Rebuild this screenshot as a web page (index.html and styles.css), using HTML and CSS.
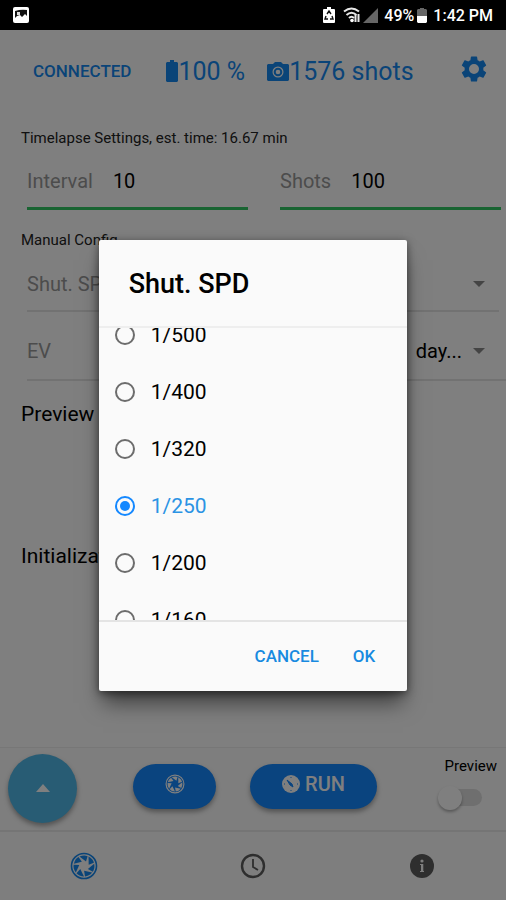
FILE: index.html
```html
<!DOCTYPE html>
<html lang="en">
<head>
<meta charset="utf-8">
<meta name="viewport" content="width=device-width, initial-scale=1">
<title>Timelapse</title>
<link rel="stylesheet" href="styles.css">
</head>
<body>
<svg class="defs" aria-hidden="true">
  <symbol id="aperture" viewBox="0 0 28 28">
    <circle cx="14" cy="14" r="12.5" fill="none" stroke="currentColor" stroke-width="1.6"/>
    <g fill="currentColor">
      <path id="blade" d="M9.500 4.600 Q14 2.600 17.600 4.200 L16 9.600Z"/>
      <use href="#blade" transform="rotate(51.43 14 14)"/>
      <use href="#blade" transform="rotate(102.86 14 14)"/>
      <use href="#blade" transform="rotate(154.29 14 14)"/>
      <use href="#blade" transform="rotate(205.71 14 14)"/>
      <use href="#blade" transform="rotate(257.14 14 14)"/>
      <use href="#blade" transform="rotate(308.57 14 14)"/>
    </g>
  </symbol>
</svg>
<div class="app">
  <div class="status">
    <svg width="16" height="16" viewBox="0 0 16 16"><rect width="16" height="16" rx="2" fill="#fff"/><path d="M2 4q6-2 12-1v6l-2-2-3 3-2-2-3 1-2 2z" fill="#111"/><path d="M4 5h3v3H4z" fill="#ddd"/></svg>
    <div class="status-right">
      <svg width="12" height="16" viewBox="0 0 12 16"><path d="M4 0h4v2h3q1 0 1 1v12q0 1-1 1H1q-1 0-1-1V3q0-1 1-1h3z" fill="#fff"/><path d="M4 7l2-3 2 3M3 9l-1 3h3M9 9l1 3H7" fill="none" stroke="#111" stroke-width="1.4"/></svg>
      <svg class="wifi" width="18" height="16" viewBox="0 0 18 16"><g fill="none" stroke="#e8e8e8" stroke-width="2"><path d="M1 4.5Q8.500-1.500 16 4.500M3.500 8Q8.500 3.500 13.500 8M6 11Q8.500 8.500 11 11"/><path d="M12.500 15V8M15.500 7v8"/></g><circle cx="9" cy="13.500" r="1.800" fill="#fff"/></svg>
      <svg class="signal" width="15" height="15" viewBox="0 0 15 15"><path d="M15 0v15H0z" fill="#666"/></svg>
      <span class="percent">49%</span>
      <svg class="cell" width="10" height="15" viewBox="0 0 10 15"><path d="M3 0h4v1h2l1 1v6H0V2l1-1h2z" fill="#666"/><path d="M0 8h10v6l-1 1H1l-1-1z" fill="#fff"/></svg>
      <span>1:42 PM</span>
    </div>
  </div>
  <div class="stage">
    <header class="header">
      <button class="connected" type="button">CONNECTED</button>
      <div class="stat battery"><svg width="12" height="22" viewBox="0 0 12 22"><path d="M4 0h4v2h3l1 1v18l-1 1H1l-1-1V3l1-1h3z" fill="currentColor"/></svg><span>100 %</span></div>
      <div class="stat"><svg width="22" height="19" viewBox="0 0 22 19"><path fill-rule="evenodd" d="M1 2h5l2-2h6l2 2h5l1 1v15l-1 1H1l-1-1V3zM11 4.500a5.500 5.500 0 1 0 0 11a5.500 5.500 0 0 0 0-11z" fill="currentColor"/><circle cx="11" cy="10" r="3.300" fill="none" stroke="currentColor" stroke-width="2"/></svg><span>1576 shots</span></div>
      <button class="gear" type="button" aria-label="Settings"><svg width="30" height="30" viewBox="0 0 24 24"><path fill="currentColor" d="M19.430 12.980c.040-.320.070-.640.070-.980s-.030-.660-.070-.980l2.110-1.650c.190-.150.240-.420.120-.640l-2-3.460c-.120-.220-.390-.300-.610-.220l-2.490 1c-.520-.400-1.080-.730-1.690-.980l-.380-2.650C14.460 2.180 14.250 2 14 2h-4c-.250 0-.460.180-.490.420l-.380 2.650c-.610.250-1.170.590-1.690.980l-2.490-1c-.230-.090-.490 0-.610.220l-2 3.460c-.130.220-.070.490.120.640l2.110 1.650c-.040.320-.070.650-.070.980s.030.660.070.980l-2.110 1.650c-.190.150-.240.420-.120.640l2 3.460c.120.220.390.300.610.220l2.490-1c.520.400 1.080.730 1.690.980l.380 2.650c.030.240.240.420.490.420h4c.250 0 .460-.180.490-.420l.380-2.650c.610-.250 1.170-.590 1.690-.980l2.490 1c.230.090.490 0 .610-.220l2-3.460c.120-.220.070-.490-.120-.640zM12 16a4 4 0 1 1 0-8 4 4 0 0 1 0 8z"/></svg></button>
    </header>
    <main class="content">
      <h2 class="caption">Timelapse Settings, est. time: 16.67 min</h2>
      <div class="fields">
        <div class="field"><label for="interval">Interval</label><input id="interval" type="text" value="10"></div>
        <div class="field"><label for="shots">Shots</label><input id="shots" type="text" value="100"></div>
      </div>
      <h2 class="caption">Manual Config</h2>
      <div class="choice first"><label for="speed">Shut. SPD</label><select id="speed"><option></option></select><i class="arrow"></i></div>
      <div class="choice"><label for="ev">EV</label><select id="ev"><option></option></select><select id="wb" class="wb" aria-label="White balance"><option>day...</option></select><i class="arrow"></i></div>
      <p class="line">Preview</p>
      <p class="line late">Initialization</p>
    </main>
    <div class="toolbar">
      <button class="fab" type="button" aria-label="More"><svg width="14" height="8" viewBox="0 0 14 8"><path d="M0 8 7 0l7 8z" fill="#fff"/></svg></button>
      <button class="pill shoot" type="button" aria-label="Shoot"><svg width="20" height="20"><use href="#aperture"/></svg></button>
      <button class="pill run" type="button"><svg width="18" height="18" viewBox="0 0 18 18"><circle cx="9" cy="9" r="9" fill="#fff"/><path d="M5 5l5 4 1 3-3-2zM9 2v1M9 15v1M2 9h1M15 9h1" fill="#1488ff" stroke="#1488ff" stroke-width="1"/></svg>RUN</button>
      <div class="preview"><label for="live">Preview</label><input id="live" type="checkbox"></div>
    </div>
    <nav class="tabs">
      <a class="active" href="#camera" aria-label="Camera"><svg width="28" height="28"><use href="#aperture"/></svg></a>
      <a href="#schedule" aria-label="Schedule"><svg width="26" height="26" viewBox="0 0 26 26"><circle cx="13" cy="13" r="11" fill="none" stroke="currentColor" stroke-width="2.400"/><path d="M13 6v8l5 3" fill="none" stroke="currentColor" stroke-width="1.800"/></svg></a>
      <a href="#about" aria-label="About"><svg width="26" height="26" viewBox="0 0 26 26"><circle cx="13" cy="13" r="12" fill="currentColor"/><circle cx="13" cy="8" r="1.600" fill="#fcfcfc"/><path d="M11 11h3.300v7H15v1h-4v-1h1v-6h-1z" fill="#fcfcfc"/></svg></a>
    </nav>
    <div class="overlay">
      <form class="dialog" role="dialog" aria-labelledby="title">
        <h1 id="title">Shut. SPD</h1>
        <div class="viewport">
          <div class="options">
            <label><input type="radio" name="spd"><span>1/500</span></label>
            <label><input type="radio" name="spd"><span>1/400</span></label>
            <label><input type="radio" name="spd"><span>1/320</span></label>
            <label><input type="radio" name="spd" checked><span>1/250</span></label>
            <label><input type="radio" name="spd"><span>1/200</span></label>
            <label><input type="radio" name="spd"><span>1/160</span></label>
          </div>
        </div>
        <div class="actions"><button type="button">CANCEL</button><button type="button">OK</button></div>
      </form>
    </div>
  </div>
</div>
</body>
</html>
```
FILE: styles.css
```css
* { box-sizing: border-box; }
body { margin: 0; background: #fff; color: #000; font-family: Roboto, "Liberation Sans", sans-serif; }
button { border: 0; padding: 0; background: none; font: inherit; color: inherit; }
input, select { font: inherit; color: inherit; border: 0; background: none; padding: 0; margin: 0; }
h1, h2, p { margin: 0; }
svg { display: block; flex: none; }
.defs { position: absolute; width: 0; height: 0; }
.app { min-height: 100vh; display: flex; flex-direction: column; }

.status { height: 30px; padding: 0 13px; background: #000; color: #fff; display: flex; align-items: center; justify-content: space-between; font-size: 16px; font-weight: 500; }
.status-right { display: flex; align-items: center; }
.wifi { margin-left: 8px; }
.signal { margin-left: 2px; }
.percent { margin-left: 6px; }
.cell { margin: 0 6px 0 3px; }

.stage { flex: 1; position: relative; display: flex; flex-direction: column; background: #fff; }
.header { height: 80px; padding: 2px 17px 0 33px; display: flex; align-items: center; color: #1488f0; }
.connected { font-size: 17px; font-weight: 500; }
.stat { display: flex; align-items: center; font-size: 25px; }
.battery { margin: 0 22px 0 35px; }
.gear { margin: 0 0 4px auto; }

.content { flex: 1; padding-top: 18px; }
.caption { padding-left: 21px; font-size: 15px; line-height: 20px; font-weight: 400; color: #222; }
.fields { display: grid; grid-template-columns: repeat(2, minmax(0, 1fr)); margin-bottom: 20px; }
.field { display: flex; align-items: center; height: 62px; margin: 0 5px 0 27px; padding-top: 7px; border-bottom: 3px solid #32c864; font-size: 20px; }
.field label, .choice label { color: #999; }
.field label { margin-right: 20px; }
.field input { flex: 1; min-width: 0; }
.choice { display: flex; align-items: center; height: 69px; margin-left: 27px; padding: 10px 21px 0 0; border-bottom: 2px solid #e4e4e4; font-size: 20px; }
.choice.first { height: 62px; margin-right: 7px; padding: 8px 14px 0 0; }
.choice select { flex: 1; min-width: 0; appearance: none; text-align-last: right; }
.arrow { margin-left: 11px; border: 6px solid transparent; border-top-color: #888; border-bottom: 0; }
.line { padding-left: 21px; margin-top: 21px; font-size: 21px; line-height: 24px; }
.line.late { margin-top: 118px; }

.toolbar { height: 85px; padding: 0 9px 2px 8px; display: flex; align-items: center; background: #fcfcfc; border-top: 1px solid #eee; border-bottom: 2px solid #eaeaea; }
.fab, .pill { display: flex; align-items: center; justify-content: center; box-shadow: 0 3px 5px rgba(0, 0, 0, .35); color: #fff; }
.fab { width: 69px; height: 69px; border-radius: 50%; background: #50b8e8; }
.pill { height: 45px; margin-bottom: 4px; border-radius: 23px; background: #1488ff; padding-bottom: 4px; }
.shoot { width: 83px; margin-left: 56px; margin-right: 34px; }
.run { width: 127px; gap: 5px; font-size: 20px; font-weight: 500; }
.preview { margin: 0 0 12px auto; display: flex; flex-direction: column; align-items: flex-end; gap: 15px; font-size: 15px; line-height: 16px; }
.preview input { appearance: none; display: flex; align-items: center; width: 36px; height: 17px; margin-right: 15px; border-radius: 9px; background: #dedede; }
.preview input::before { content: ""; flex: none; width: 24px; height: 24px; margin-left: -8px; border-radius: 50%; background: #fff; box-shadow: 0 2px 3px rgba(0, 0, 0, .3); }

.tabs { height: 68px; display: grid; grid-template-columns: repeat(3, 1fr); place-items: center; background: #fcfcfc; color: #5c5c5c; }
.tabs a { color: inherit; }
.tabs .active { color: #1488f0; }

.overlay { position: absolute; inset: 0; background: rgba(0, 0, 0, .5); display: grid; place-items: center; }
.dialog { width: 61%; border-radius: 2px; background: #fafafa; box-shadow: 0 16px 20px -4px rgba(0, 0, 0, .5), 0 2px 8px rgba(0, 0, 0, .5); }
.dialog h1 { padding: 29px 30px 26px; font-size: 27px; line-height: 31px; font-weight: 500; }
.viewport { height: 296px; overflow: hidden; border-top: 2px solid #eee; border-bottom: 2px solid #e4e4e4; }
.options { margin-top: -21px; }
.options label { height: 57px; padding-left: 16px; display: flex; align-items: center; gap: 16px; font-size: 21px; }
.options input { appearance: none; width: 20px; height: 20px; border: 2px solid #6c6c6c; border-radius: 50%; display: grid; place-items: center; }
.options input:checked { border-color: #1488ff; }
.options input:checked::before { content: ""; width: 10px; height: 10px; border-radius: 50%; background: #1488ff; }
.options input:checked + span { color: #2b93e4; }
.actions { height: 69px; padding-right: 32px; display: flex; align-items: center; justify-content: flex-end; gap: 34px; color: #188ae0; font-size: 17px; font-weight: 500; }
```
